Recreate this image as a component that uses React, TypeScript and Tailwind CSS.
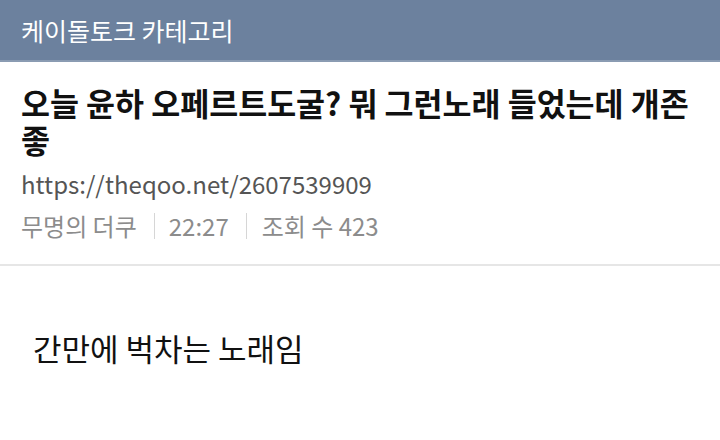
import React from 'react';

const font = { fontFamily: '"Noto Sans CJK KR", "Noto Sans", sans-serif' };

export default function App() {
  return (
    <div className="w-[720px] h-[440px] bg-white overflow-hidden" style={font}>
      <header className="h-[62px] bg-[#6c819e] flex items-center px-[21px] border-b-2 border-[#8a9bb2]">
        <span className="text-white text-[25px] leading-none">케이돌토크 카테고리</span>
      </header>
      <section className="px-[21px] pt-[22px] pb-[22px] border-b-2 border-[#e6e6e6]">
        <h1 className="text-[31.5px] font-bold leading-[37px] text-[#111] break-keep">
          오늘 윤하 오페르트도굴? 뭐 그런노래 들었는데 개존 좋
        </h1>
        <div className="mt-[10px] text-[24px] leading-[32px] text-[#555]">https://theqoo.net/2607539909</div>
        <div className="mt-[10px] flex items-center text-[24px] leading-[32px] text-[#8c8c8c]">
          <span>무명의 더쿠</span>
          <span className="ml-[17px] mr-[14px] w-px h-[26px] bg-[#d6d6d6]" />
          <span>22:27</span>
          <span className="ml-[17px] mr-[15px] w-px h-[26px] bg-[#d6d6d6]" />
          <span>조회 수 423</span>
        </div>
      </section>
      <div className="pl-[33px] pt-[62px] text-[31px] leading-[40px] text-[#111]">간만에 벅차는 노래임</div>
    </div>
  );
}
